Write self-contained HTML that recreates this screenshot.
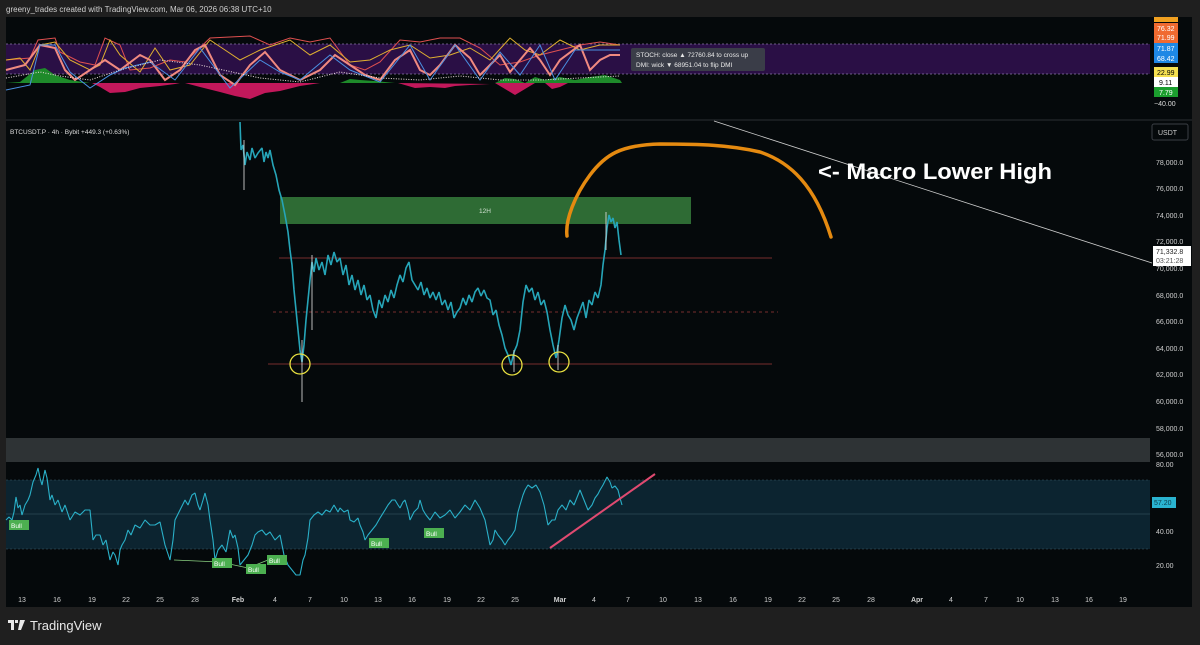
<!DOCTYPE html>
<html><head><meta charset="utf-8"><style>
html,body{margin:0;padding:0;background:#1f1f1f;width:1200px;height:645px;overflow:hidden;font-family:"Liberation Sans",sans-serif}
svg{display:block}
</style></head><body>
<svg width="1200" height="645" viewBox="0 0 1200 645" xmlns="http://www.w3.org/2000/svg" font-family="Liberation Sans, sans-serif">
<rect width="1200" height="645" fill="#1f1f1f"/>
<text x="6" y="12" font-size="8" fill="#cfcfcf">greeny_trades created with TradingView.com, Mar 06, 2026 06:38 UTC+10</text>
<rect x="6" y="17" width="1186" height="590" fill="#05090b"/>
<rect x="6" y="44" width="1144" height="30" fill="#2a0f45"/>
<line x1="6" y1="44" x2="1150" y2="44" stroke="#8a7aa8" stroke-dasharray="2,2" stroke-width="0.7"/>
<line x1="6" y1="74" x2="1150" y2="74" stroke="#8a7aa8" stroke-dasharray="2,2" stroke-width="0.7"/>
<line x1="6" y1="120" x2="1192" y2="120" stroke="#2a2e33" stroke-width="1"/>
<!-- histogram -->
<path d="M6,83 L20,82 L35,70 L45,68 L55,75 L70,80 L90,83 Z" fill="#1e8a2a"/>
<path d="M92,83 L100,87 L110,93 L125,92 L140,88 L160,86 L175,84 L180,83 Z" fill="#c2185b"/>
<path d="M185,83 L200,87 L220,92 L235,96 L250,99 L265,93 L280,91 L300,86 L320,83 Z" fill="#c2185b"/>
<path d="M340,83 L350,79 L360,80 L375,81 L395,83 Z" fill="#1e8a2a"/>
<path d="M398,83 L415,88 L430,87 L445,88 L455,86 L470,85 L490,84 Z" fill="#c2185b"/>
<path d="M495,83 L505,78 L515,79 L525,83 Z" fill="#1e8a2a"/>
<path d="M495,83 L505,89 L515,95 L525,89 L535,83 Z" fill="#c2185b"/>
<path d="M525,83 L535,77 L545,80 L560,77 L575,80 L590,77 L605,75 L620,80 L622,83 Z" fill="#1e8a2a"/>
<path d="M545,83 L552,89 L560,87 L568,83 Z" fill="#c2185b"/>
<!-- oscillator lines -->
<polyline fill="none" stroke="#e05050" stroke-width="1" points="6,60 30,58 38,40 55,38 60,52 80,62 95,65 105,38 120,45 130,70 150,68 170,60 185,62 210,38 250,36 270,45 290,38 310,42 330,38 350,65 365,70 380,62 400,40 420,42 440,38 460,38 480,48 500,65 520,62 540,55 560,50 580,45 600,42 620,45"/>
<polyline fill="none" stroke="#e0b030" stroke-width="1" points="6,60 20,58 30,70 40,45 55,42 70,60 90,70 100,65 110,40 120,55 140,72 155,48 170,70 190,65 210,40 225,50 240,60 260,50 290,40 310,55 330,45 350,62 370,60 390,50 410,45 430,58 450,55 470,48 490,60 510,38 525,50 540,55 560,40 580,50 600,45 620,45"/>
<polyline fill="none" stroke="#f08a80" stroke-width="2" points="6,70 25,65 40,45 55,48 65,70 75,80 90,70 105,60 120,70 140,55 150,60 165,80 180,70 195,50 205,45 220,75 235,85 250,65 265,52 280,70 300,80 320,70 335,55 350,65 365,75 380,80 395,60 410,50 420,70 430,75 440,65 455,45 470,58 480,75 490,65 500,55 510,72 520,60 530,48 540,60 550,75 560,60 580,45 590,70 600,60 610,55 620,55"/>
<polyline fill="none" stroke="#4a90e2" stroke-width="1" points="6,90 30,85 40,45 55,45 70,72 90,88 110,75 125,68 150,62 175,80 200,48 230,88 260,60 280,72 300,80 330,55 350,70 380,82 410,45 430,80 455,45 480,80 500,52 520,75 540,45 555,80 575,50 600,50 620,50"/>
<polyline fill="none" stroke="#f0e0e0" stroke-width="1" stroke-dasharray="1,1.5" points="6,78 40,72 60,76 90,80 120,70 160,60 200,65 260,78 300,82 340,72 380,78 420,80 460,76 500,80 540,80 580,78 620,76"/>
<rect x="631" y="48" width="134" height="23" rx="2" fill="#3a3d48"/>
<text x="636" y="57" font-size="6.5" fill="#e8e8e8">STOCH: close ▲ 72760.84 to cross up</text>
<text x="636" y="67" font-size="6.5" fill="#e8e8e8">DMI: wick ▼ 68951.04 to flip DMI</text>
<rect x="1154" y="17" width="24" height="5" fill="#f0a020"/>
<rect x="1154" y="23" width="24" height="20" fill="#f06a30"/>
<text x="1157" y="31" font-size="7" fill="#fff">76.32</text>
<text x="1157" y="40" font-size="7" fill="#fff">71.99</text>
<rect x="1154" y="43" width="24" height="20" fill="#1e88e5"/>
<text x="1157" y="51" font-size="7" fill="#fff">71.87</text>
<text x="1157" y="61" font-size="7" fill="#fff">68.42</text>
<rect x="1154" y="67" width="24" height="10" fill="#f5e050"/>
<text x="1157" y="75" font-size="7" fill="#000">22.99</text>
<rect x="1154" y="77" width="24" height="10" fill="#ffffff"/>
<text x="1159" y="85" font-size="7" fill="#000">9.11</text>
<rect x="1154" y="87" width="24" height="10" fill="#1b9e2e"/>
<text x="1159" y="95" font-size="7" fill="#fff">7.79</text>
<text x="1154" y="106" font-size="7" fill="#ddd">−40.00</text>
<!-- main pane -->
<text x="10" y="134" font-size="6.5" fill="#dddddd">BTCUSDT.P · 4h · Bybit  +449.3 (+0.63%)</text>
<rect x="1152" y="124" width="36" height="16" rx="2" fill="none" stroke="#3a3e44"/>
<text x="1158" y="135" font-size="7" fill="#ccc">USDT</text>
<g font-size="7" fill="#cfcfcf">
<text x="1156" y="165">78,000.0</text><text x="1156" y="191">76,000.0</text><text x="1156" y="218">74,000.0</text>
<text x="1156" y="244">72,000.0</text><text x="1156" y="271">70,000.0</text><text x="1156" y="298">68,000.0</text>
<text x="1156" y="324">66,000.0</text><text x="1156" y="351">64,000.0</text><text x="1156" y="377">62,000.0</text>
<text x="1156" y="404">60,000.0</text><text x="1156" y="431">58,000.0</text><text x="1156" y="457">56,000.0</text>
</g>
<rect x="1153" y="246" width="38" height="20" fill="#fff"/>
<text x="1156" y="254" font-size="7" fill="#222">71,332.8</text>
<text x="1156" y="263" font-size="7" fill="#555">03:21:28</text>
<rect x="280" y="197" width="411" height="27" fill="#2e6b34"/>
<text x="479" y="213" font-size="6.5" fill="#cfe0cf">12H</text>
<line x1="279" y1="258" x2="772" y2="258" stroke="#9c3a3a" stroke-width="0.8"/>
<line x1="273" y1="312" x2="778" y2="312" stroke="#9c3a3a" stroke-width="0.8" stroke-dasharray="3,3"/>
<line x1="268" y1="364" x2="772" y2="364" stroke="#9c3a3a" stroke-width="0.8"/>
<line x1="714" y1="121" x2="1152" y2="263" stroke="#cfcfcf" stroke-width="0.8"/>
<!-- price (jagged candles approximation) -->
<polyline fill="none" stroke="#26a5b8" stroke-width="1.6" stroke-linejoin="bevel" points="240,122 241,150 243,145 245,165 247,152 250,160 252,148 255,158 258,153 262,148 264,162 266,152 268,158 270,150 273,165 276,175 279,190 282,200 285,215 288,232 290,250 292,265 294,290 296,310 298,330 300,350 302,362 304,345 306,320 308,300 310,280 312,262 314,272 316,258 319,270 322,262 325,275 328,255 331,265 334,252 337,262 340,258 343,275 346,265 349,285 352,275 355,290 358,280 361,295 364,285 367,300 370,295 373,310 376,318 379,300 382,308 385,295 388,302 391,290 394,298 397,285 400,275 403,282 406,268 409,262 412,280 415,285 418,290 421,282 424,295 427,288 430,298 433,292 436,300 439,292 442,305 445,300 448,310 451,302 454,318 457,312 460,308 463,298 466,305 469,295 472,302 475,292 478,288 481,296 484,290 487,298 490,300 493,315 496,310 499,325 502,335 505,348 508,355 511,365 514,352 517,345 520,330 523,302 526,285 529,292 532,288 535,300 538,292 541,305 544,300 547,312 550,330 553,345 556,358 559,340 562,318 565,305 568,315 571,320 574,330 577,318 580,310 583,302 586,318 589,300 592,305 595,292 598,298 601,285 603,265 605,250 607,228 609,215 611,222 613,218 615,228 617,222 619,240 621,255"/>
<g stroke="#e8e8e8" stroke-width="0.8">
<line x1="302" y1="340" x2="302" y2="402"/><line x1="244" y1="140" x2="244" y2="190"/>
<line x1="514" y1="350" x2="514" y2="372"/><line x1="558" y1="345" x2="558" y2="370"/>
<line x1="606" y1="212" x2="606" y2="250"/><line x1="312" y1="255" x2="312" y2="330"/>
</g>
<g fill="none" stroke="#e8e040" stroke-width="1.3">
<circle cx="300" cy="364" r="10"/><circle cx="512" cy="365" r="10"/><circle cx="559" cy="362" r="10"/>
</g>
<path d="M567,236 C565,220 575,195 590,175 C605,155 620,145 660,144 C700,144 730,145 760,152 C790,162 815,185 831,237" fill="none" stroke="#e58a10" stroke-width="3.5" stroke-linecap="round"/>
<text x="818" y="179" font-size="22" font-weight="bold" fill="#ffffff" textLength="234" lengthAdjust="spacingAndGlyphs">&lt;- Macro Lower High</text>
<rect x="6" y="438" width="1144" height="24" fill="#2e3335"/>
<!-- RSI pane -->
<rect x="6" y="480" width="1144" height="69" fill="#0c2430"/>
<line x1="6" y1="480" x2="1150" y2="480" stroke="#3a5a66" stroke-dasharray="2,2" stroke-width="0.6"/>
<line x1="6" y1="514" x2="1150" y2="514" stroke="#3a5a66" stroke-width="0.6"/>
<line x1="6" y1="549" x2="1150" y2="549" stroke="#3a5a66" stroke-dasharray="2,2" stroke-width="0.6"/>
<g font-size="7" fill="#cfcfcf">
<text x="1156" y="467">80.00</text><text x="1156" y="534">40.00</text><text x="1156" y="568">20.00</text>
</g>
<rect x="1152" y="497" width="24" height="11" fill="#2ab3d0"/>
<text x="1154" y="505" font-size="7" fill="#0b3b4a">57.20</text>
<polyline fill="none" stroke="#2ab0c8" stroke-width="1.1" stroke-linejoin="bevel" points="6,520 9,517 12,520 14,512 16,497 18,508 20,505 22,515 25,505 28,500 30,495 33,482 36,475 38,468 40,478 42,485 45,470 47,478 50,500 52,495 55,505 58,500 62,512 65,505 70,520 75,512 80,515 85,510 90,510 93,540 96,535 100,535 103,545 106,540 110,560 113,552 115,555 118,565 120,550 122,545 125,540 128,530 131,535 135,525 140,528 145,520 150,525 155,525 160,522 165,545 170,560 173,540 175,520 180,510 185,500 188,505 192,495 195,493 198,505 200,510 203,500 205,493 208,505 210,520 213,540 215,560 218,550 222,545 226,552 230,530 233,538 235,535 238,548 240,565 244,560 248,555 252,545 255,535 258,532 262,530 266,535 270,532 275,540 280,535 284,555 288,565 292,570 296,575 300,575 303,560 305,555 308,538 310,520 314,515 318,512 322,515 326,510 330,512 334,505 338,512 340,508 344,512 348,510 350,520 354,522 358,518 360,525 363,532 365,540 368,535 372,530 376,525 380,518 385,510 388,505 392,500 395,500 398,505 400,508 403,502 405,500 408,510 410,520 414,512 418,508 420,500 423,510 426,515 430,520 435,512 440,518 445,515 450,510 455,518 460,512 465,505 470,510 475,500 480,508 485,520 488,535 490,545 493,540 495,530 498,535 502,540 505,545 508,540 512,535 515,530 518,512 520,505 523,495 525,490 528,485 532,488 536,485 540,492 544,505 548,525 552,520 555,520 558,510 562,505 566,510 570,500 574,505 578,495 580,490 584,500 588,510 592,505 595,498 598,494 600,490 603,485 607,477 610,482 612,488 615,486 618,490 620,498 622,505"/>
<polyline fill="none" stroke="#8ad080" stroke-width="0.8" points="174,560 220,562 248,568 268,560"/>
<line x1="550" y1="548" x2="655" y2="474" stroke="#e04a70" stroke-width="2"/>
<g font-size="6.5" fill="#fff">
<rect x="9" y="520" width="20" height="10" fill="#4caf50"/><text x="11" y="528">Bull</text>
<rect x="212" y="558" width="20" height="10" fill="#4caf50"/><text x="214" y="566">Bull</text>
<rect x="246" y="564" width="20" height="10" fill="#4caf50"/><text x="248" y="572">Bull</text>
<rect x="267" y="555" width="20" height="10" fill="#4caf50"/><text x="269" y="563">Bull</text>
<rect x="369" y="538" width="20" height="10" fill="#4caf50"/><text x="371" y="546">Bull</text>
<rect x="424" y="528" width="20" height="10" fill="#4caf50"/><text x="426" y="536">Bull</text>
</g>
<g font-size="7" fill="#cfcfcf" text-anchor="middle">
<text x="22" y="602">13</text><text x="57" y="602">16</text><text x="92" y="602">19</text><text x="126" y="602">22</text>
<text x="160" y="602">25</text><text x="195" y="602">28</text><text x="238" y="602" font-weight="bold">Feb</text><text x="275" y="602">4</text>
<text x="310" y="602">7</text><text x="344" y="602">10</text><text x="378" y="602">13</text><text x="412" y="602">16</text>
<text x="447" y="602">19</text><text x="481" y="602">22</text><text x="515" y="602">25</text><text x="560" y="602" font-weight="bold">Mar</text>
<text x="594" y="602">4</text><text x="628" y="602">7</text><text x="663" y="602">10</text><text x="698" y="602">13</text>
<text x="733" y="602">16</text><text x="768" y="602">19</text><text x="802" y="602">22</text><text x="836" y="602">25</text>
<text x="871" y="602">28</text><text x="917" y="602" font-weight="bold">Apr</text><text x="951" y="602">4</text><text x="986" y="602">7</text>
<text x="1020" y="602">10</text><text x="1055" y="602">13</text><text x="1089" y="602">16</text><text x="1123" y="602">19</text>
</g>
<path d="M8,620 h6 v10 h-3 v-7 h-3 z M15,620 h3 v3 h-3 z M20,620 h5 l-4,10 h-3 z" fill="#e8e8e8"/>
<text x="30" y="630" font-size="13" fill="#e8e8e8">TradingView</text>
</svg>
</body></html>
